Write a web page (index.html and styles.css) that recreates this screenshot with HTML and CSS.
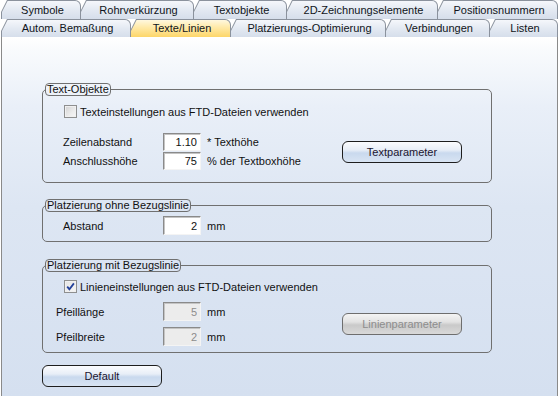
FILE: index.html
```html
<!DOCTYPE html>
<html lang="de">
<head>
    <meta charset="UTF-8">
    <title>Texte/Linien</title>
    <link rel="stylesheet" href="styles.css">
</head>
<body>
    <div class="tabs">
        <div class="tab-row">
            <div class="tab t-symbole"><span>Symbole</span></div>
            <div class="tab t-rohr"><span>Rohrverkürzung</span></div>
            <div class="tab t-textobj"><span>Textobjekte</span></div>
            <div class="tab t-zeich"><span>2D-Zeichnungselemente</span></div>
            <div class="tab t-pos"><span>Positionsnummern</span></div>
        </div>
        <div class="tab-row">
            <div class="tab t-bemass"><span>Autom. Bemaßung</span></div>
            <div class="tab t-texte active"><span>Texte/Linien</span></div>
            <div class="tab t-platz"><span>Platzierungs-Optimierung</span></div>
            <div class="tab t-verb"><span>Verbindungen</span></div>
            <div class="tab t-listen"><span>Listen</span></div>
        </div>
    </div>

    <div class="panel">
        <!-- Text-Objekte -->
        <fieldset class="group">
            <legend>Text-Objekte</legend>
            <div class="group-body g1">
                <label class="check"><span class="box"></span>Texteinstellungen aus FTD-Dateien verwenden</label>
                <div class="split tight">
                    <div class="rows">
                        <div class="row"><span class="lbl">Zeilenabstand</span><input class="num" type="text" value="1.10"><span class="unit">* Texthöhe</span></div>
                        <div class="row"><span class="lbl">Anschlusshöhe</span><input class="num" type="text" value="75"><span class="unit">% der Textboxhöhe</span></div>
                    </div>
                    <button class="btn">Textparameter</button>
                </div>
            </div>
        </fieldset>

        <!-- ohne Bezugslinie -->
        <fieldset class="group g2-wrap">
            <legend>Platzierung ohne Bezugslinie</legend>
            <div class="group-body g2">
                <div class="row"><span class="lbl">Abstand</span><input class="num tall" type="text" value="2"><span class="unit">mm</span></div>
            </div>
        </fieldset>

        <!-- mit Bezugslinie -->
        <fieldset class="group g3-wrap">
            <legend>Platzierung mit Bezugslinie</legend>
            <div class="group-body g3">
                <label class="check">
                    <span class="box checked">
                        <svg width="9" height="9" viewBox="0 0 9 9"><path d="M1.2 4.6 L3.4 7.2 L7.9 1.4" fill="none" stroke="#23419a" stroke-width="1.8"/></svg>
                    </span>Linieneinstellungen aus FTD-Dateien verwenden
                </label>
                <div class="split wide">
                    <div class="rows">
                        <div class="row"><span class="lbl narrow">Pfeillänge</span><input class="num tall" type="text" value="5" disabled><span class="unit">mm</span></div>
                        <div class="row"><span class="lbl narrow">Pfeilbreite</span><input class="num tall" type="text" value="2" disabled><span class="unit">mm</span></div>
                    </div>
                    <button class="btn" disabled>Linienparameter</button>
                </div>
            </div>
        </fieldset>

        <button class="btn default-btn">Default</button>
    </div>
</body>
</html>
```

FILE: styles.css
```css
* {
    box-sizing: border-box;
}

html, body {
    margin: 0;
    height: 100%;
}

body {
    font-family: "Liberation Sans", Arial, sans-serif;
    font-size: 11px;
    color: #111;
    background: #fff;
    display: flex;
    flex-direction: column;
    height: 396px;
    overflow: hidden;
}

/* tabs */

.tabs {
    margin-left: 1px;
    width: 557px;
}

.tab-row {
    display: flex;
}

.tab {
    position: relative;
    flex: none;
    height: 19px;
    margin-left: -1px;
    background: #8b929d;
    border-top-right-radius: 6px;
    clip-path: polygon(0 100%, 0 12px, 6px 0, 100% 0, 100% 100%);
    display: flex;
    align-items: center;
    justify-content: center;
    color: #101420;
    padding-left: 3px;
}

.tab:first-child {
    margin-left: 0;
}

.tab::before {
    content: '';
    position: absolute;
    top: 1px;
    left: 1px;
    right: 1px;
    bottom: 0;
    background: linear-gradient(#f5f7fb, #e3e9f2 50%, #d6deeb);
    border-top-right-radius: 5px;
    clip-path: polygon(0 100%, 0 11px, 5.6px 0, 100% 0, 100% 100%);
}

.tab.active::before {
    background: linear-gradient(#fff8df, #ffe9a6 45%, #fdd669);
}

.tab-row + .tab-row .tab {
    height: 18px;
}

.tab span {
    position: relative;
    white-space: nowrap;
}

.t-symbole { width: 80px; }
.t-rohr { width: 114px; }
.t-textobj { width: 94px; }
.t-zeich { width: 152px; }
.t-pos { width: 121px; }

.t-bemass { width: 130px; }
.t-texte { width: 101px; }
.t-platz { width: 156px; }
.t-verb { width: 105px; }
.t-listen { width: 69px; }

/* panel */

.panel {
    flex: 1;
    margin-left: 1px;
    width: 557px;
    border-left: 1px solid #8a8a8a;
    border-right: 1px solid #8a8a8a;
    background: linear-gradient(#ffffff 0px, #f9fbfd 12px, #e9eff8 70px, #dde6f3 170px, #d5e0f0 100%);
    padding: 46px 0 0 40px;
}

.group {
    width: 450px;
    margin: 0;
    padding: 0;
    min-width: 0;
    border: 1px solid #707070;
    border-radius: 5px;
}

.group legend {
    margin-left: 2px;
    padding: 0 1px;
    line-height: 11px;
    border: 1px solid #707070;
    border-radius: 4px;
    color: #111;
}

.g2-wrap {
    margin-top: 16px;
}

.g3-wrap {
    margin-top: 17px;
}

.group-body {
    padding-left: 20px;
}

.g1 {
    padding-top: 9px;
    padding-bottom: 12px;
}

.g2 {
    padding-top: 4px;
    padding-bottom: 6px;
}

.g3 {
    padding-top: 8px;
    padding-bottom: 6px;
}

.check {
    display: flex;
    align-items: center;
    height: 13px;
    margin-left: 1px;
}

.box {
    width: 13px;
    height: 13px;
    margin-right: 3px;
    border: 1px solid #8e8f8f;
    background: linear-gradient(135deg, #d2d2d2, #ececec 60%, #f7f7f7);
    box-shadow: inset 0 0 0 1px #f0f0f0;
    display: flex;
    align-items: center;
    justify-content: center;
}

.box.checked {
    background: linear-gradient(135deg, #e4e4e4, #f6f6f6);
}

.split {
    display: flex;
    align-items: center;
    justify-content: space-between;
}

.split.tight {
    margin-top: 15px;
}

.split.tight .row + .row {
    margin-top: 1px;
}

.split.wide {
    margin-top: 9px;
}

.split.wide .row + .row {
    margin-top: 6px;
}

.row {
    display: flex;
    align-items: center;
}

.lbl {
    width: 100px;
}

.lbl.narrow {
    margin-left: -7px;
    width: 107px;
}

.num {
    width: 38px;
    height: 18px;
    margin: 0;
    padding: 0 3px 0 0;
    font: inherit;
    color: #111;
    text-align: right;
    background: #fff;
    border: 1px solid;
    border-color: #8a8a8a #f4f4f4 #f4f4f4 #8a8a8a;
    box-shadow: inset 1px 1px 0 #c4c4c4;
    outline: none;
}

.num.tall {
    height: 19px;
}

.num:disabled {
    background: #ececec;
    color: #8c8c8c;
}

.unit {
    margin-left: 6px;
}

.btn {
    width: 120px;
    height: 22px;
    margin: 0 29px 0 0;
    padding: 0;
    font: inherit;
    color: #1b1530;
    border: 1px solid #1e1e1e;
    border-radius: 6px;
    background: linear-gradient(#fbfcfe, #e8eef7 40%, #c9d9ee 55%, #d8e4f3);
}

.btn:disabled {
    color: #8d8d8d;
    border-color: #6e6e6e;
    background: linear-gradient(#f4f4f4, #e2e2e2 40%, #c9c9c9 55%, #d9d9d9);
}

.default-btn {
    display: block;
    margin-top: 12px;
}
```
